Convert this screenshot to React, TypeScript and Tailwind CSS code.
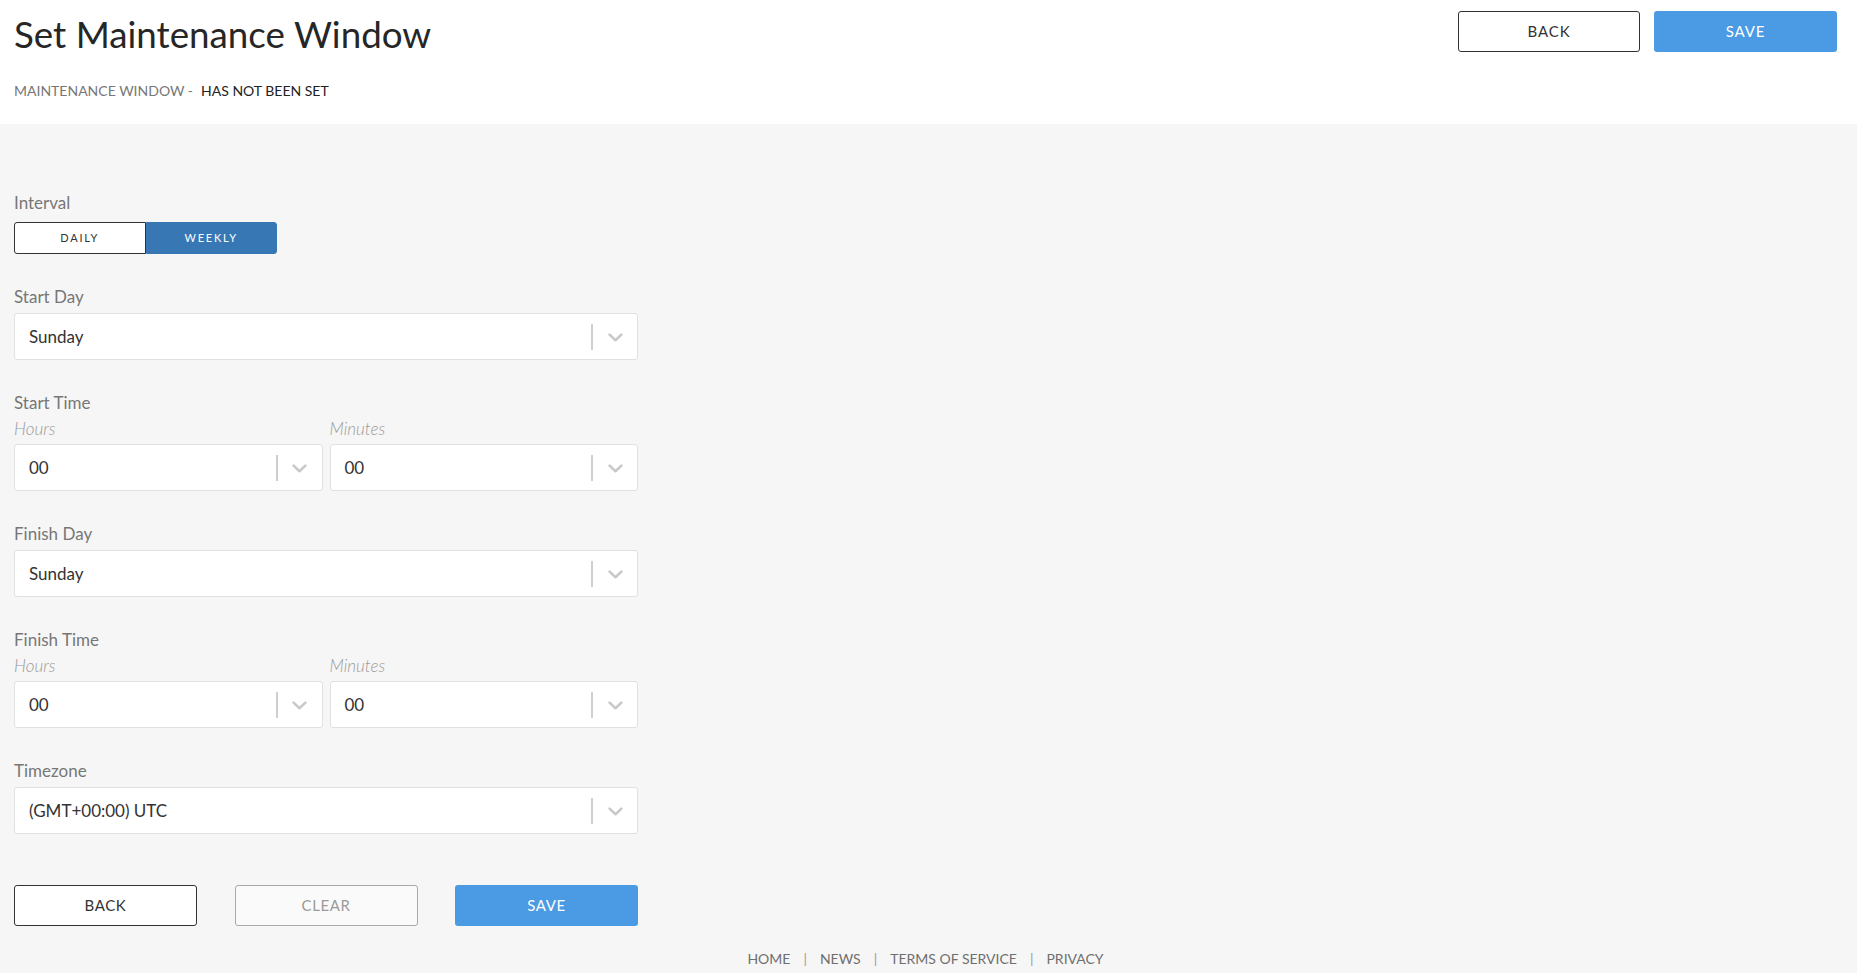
import React, { useState } from 'react';

const font = { fontFamily: 'Lato, "Open Sans", "Liberation Sans", sans-serif' };

const Chevron: React.FC = () => (
  <svg width="15" height="9" viewBox="0 0 15 9" fill="none">
    <path d="M1.6 1.6 L7.5 7.2 L13.4 1.6" stroke="#c9c9c9" strokeWidth="2.6" strokeLinecap="round" strokeLinejoin="round" />
  </svg>
);

interface SelectBoxProps {
  value: string;
  className?: string;
}

const SelectBox: React.FC<SelectBoxProps> = ({ value, className = '' }) => (
  <div className={`flex h-[47px] items-center rounded-[3px] border border-[#e1e1e1] bg-white pl-[14px] ${className}`}>
    <span className="flex-1 text-[17px] text-[#333333]">{value}</span>
    <div className="h-[26px] w-[2px] bg-[#cfcfcf]" />
    <div className="flex w-[44px] items-center justify-center pt-[2px]">
      <Chevron />
    </div>
  </div>
);

const Label: React.FC<{ children: React.ReactNode; className?: string }> = ({ children, className = '' }) => (
  <div className={`text-[17px] leading-[22px] text-[#777777] ${className}`}>{children}</div>
);

const SubLabel: React.FC<{ children: React.ReactNode }> = ({ children }) => (
  <div className="mt-[4px] text-[17px] font-light italic leading-[22px] text-[#9b9b9b]">{children}</div>
);

const TimePair: React.FC = () => (
  <div className="grid grid-cols-2 gap-[7px]">
    <div>
      <SubLabel>Hours</SubLabel>
      <SelectBox value="00" className="mt-[4px]" />
    </div>
    <div>
      <SubLabel>Minutes</SubLabel>
      <SelectBox value="00" className="mt-[4px]" />
    </div>
  </div>
);

export default function App() {
  const [interval, setInterval] = useState<'daily' | 'weekly'>('weekly');

  return (
    <div className="min-h-screen w-full bg-[#f6f6f6]" style={font}>
      {/* Header */}
      <div className="flex h-[124px] justify-between bg-white pl-[14px] pr-[20px]">
        <div className="pt-[12px]">
          <h1 className="text-[36.75px] leading-[44px] text-[#262626]">Set Maintenance Window</h1>
          <div className="mt-[25px] text-[14px] leading-[20px] text-[#777777]">
            MAINTENANCE WINDOW -<span className="ml-[8px] text-[#222222]">HAS NOT BEEN SET</span>
          </div>
        </div>
        <div className="flex gap-[14px] pt-[11px]">
          <button className="h-[41px] w-[182px] rounded-[3px] border border-[#333333] bg-white text-[15px] tracking-[0.06em] text-[#333333]">
            BACK
          </button>
          <button className="h-[41px] w-[183px] rounded-[3px] bg-[#4a9ae4] text-[15px] tracking-[0.06em] text-white">
            SAVE
          </button>
        </div>
      </div>

      {/* Form */}
      <div className="w-[624px] box-content pl-[14px] pt-[68px]">
        <Label>Interval</Label>
        <div className="mt-[8px] grid h-[32px] w-[263px] grid-cols-2 text-[11px] tracking-[0.16em]">
          <button
            onClick={() => setInterval('daily')}
            className={`rounded-l-[3px] border ${interval === 'daily' ? 'border-[#3778b4] bg-[#3778b4] text-white' : 'border-[#333333] bg-white text-[#333333]'}`}
          >
            DAILY
          </button>
          <button
            onClick={() => setInterval('weekly')}
            className={`rounded-r-[3px] border ${interval === 'weekly' ? 'border-[#3778b4] bg-[#3778b4] text-white' : 'border-[#333333] bg-white text-[#333333]'}`}
          >
            WEEKLY
          </button>
        </div>

        <Label className="mt-[32px]">Start Day</Label>
        <SelectBox value="Sunday" className="mt-[5px]" />

        <Label className="mt-[32px]">Start Time</Label>
        <TimePair />

        <Label className="mt-[32px]">Finish Day</Label>
        <SelectBox value="Sunday" className="mt-[5px]" />

        <Label className="mt-[32px]">Finish Time</Label>
        <TimePair />

        <Label className="mt-[32px]">Timezone</Label>
        <SelectBox value="(GMT+00:00) UTC" className="mt-[5px]" />

        <div className="mt-[51px] flex justify-between">
          <button className="h-[41px] w-[183px] rounded-[3px] border border-[#333333] bg-white text-[15px] tracking-[0.04em] text-[#333333]">
            BACK
          </button>
          <button className="h-[41px] w-[183px] rounded-[3px] border border-[#a8a8a8] bg-[#fafafa] text-[15px] tracking-[0.04em] text-[#9a9a9a]">
            CLEAR
          </button>
          <button className="h-[41px] w-[183px] rounded-[3px] bg-[#4a9ae4] text-[15px] tracking-[0.04em] text-white">
            SAVE
          </button>
        </div>
      </div>

      {/* Footer */}
      <div className="mt-[23px] flex justify-center pb-[10px] pr-[6px] text-[14px] leading-[20px] text-[#6f6f6f]">
        <a>HOME</a>
        <span className="mx-[13px] text-[#999999]">|</span>
        <a>NEWS</a>
        <span className="mx-[13px] text-[#999999]">|</span>
        <a>TERMS OF SERVICE</a>
        <span className="mx-[13px] text-[#999999]">|</span>
        <a>PRIVACY</a>
      </div>
    </div>
  );
}
